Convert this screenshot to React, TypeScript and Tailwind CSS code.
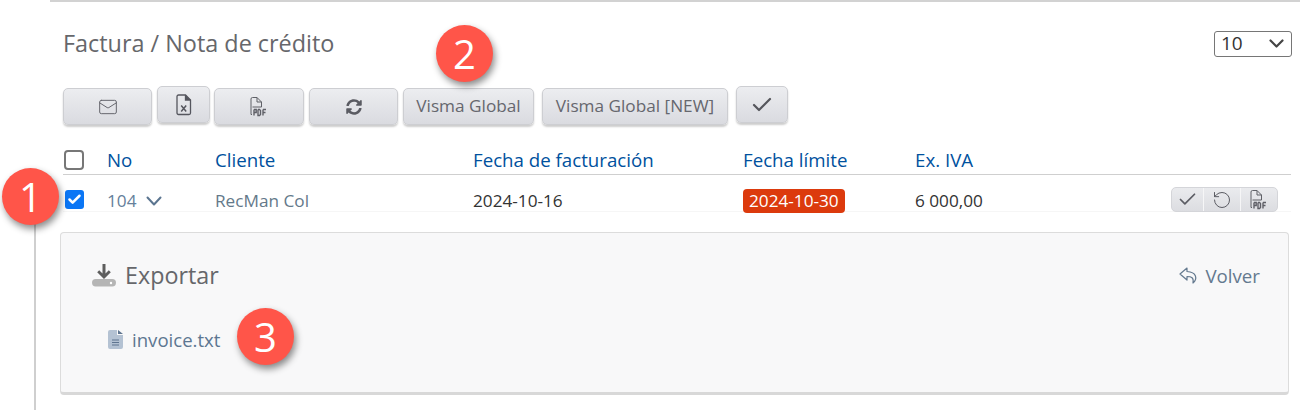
import { Check, Mail, RotateCcw } from 'lucide-react';
import { FaSyncAlt } from 'react-icons/fa';

function Chevron({ w, h, sw, color }: { w: number; h: number; sw: number; color: string }) {
  return (
    <svg width={w} height={h} viewBox={`0 0 ${w} ${h}`} fill="none" stroke={color} strokeWidth={sw} strokeLinecap="round" strokeLinejoin="round">
      <path d={`M1.500 1.500L${w / 2} ${h - 1.500}L${w - 1.500} 1.500`} />
    </svg>
  );
}

function FileX() {
  return (
    <svg width="16" height="22" viewBox="0 0 16 22" fill="none" stroke="#55565e" strokeWidth="1.300">
      <path d="M2.500 1h7l5 5v13a1.500 1.500 0 0 1-1.500 1.500H2.500A1.500 1.500 0 0 1 1 19V2.500A1.500 1.500 0 0 1 2.500 1z" />
      <path d="M9.500 1v5h5" fill="#55565e" />
      <path d="M5.200 11.500l5 6M10.200 11.500l-5 6" strokeWidth="1.500" />
    </svg>
  );
}

function FilePdf() {
  return (
    <svg width="18" height="20" viewBox="0 0 18 20" fill="none" stroke="#5f6067" strokeWidth="1">
      <path d="M2 17.500H1V2a1.500 1.500 0 0 1 1.500-1.500h4.500L11.500 5v5H2.500" />
      <path d="M7 .5V5h4.500" />
      <path d="M4 12.500v6M4 12.500h2.200v3H4M8 12.500v6h1.500l1-1v-4l-1-1H8M13 12.500v6M13 12.500h3M13 15.500h2.500" strokeWidth="1.400" />
    </svg>
  );
}

function DownloadDrive() {
  return (
    <svg width="24" height="24" viewBox="0 0 24 24">
      <rect x="0" y="15" width="24" height="7.500" rx="3.700" fill="#b5b5b5" />
      <circle cx="19" cy="19" r="1.200" fill="#fff" />
      <path d="M10.500 0h3v9.500l3.300-3.300 2 2L12 15 5.200 8.200l2-2 3.300 3.300z" fill="#5e5e5e" />
    </svg>
  );
}

function ReplyOutline() {
  return (
    <svg width="20" height="17" viewBox="0 0 20 17" fill="none" stroke="#64798f" strokeWidth="1.200" strokeLinejoin="round">
      <path d="M8 1L1 7l7 6V9.500c4.500 0 7 1 6 6.500 4.500-4 4-11-6-11.500z" />
    </svg>
  );
}

function TxtFile() {
  return (
    <svg width="15" height="19" viewBox="0 0 15 19">
      <path d="M2 0h7v5h6v12a2 2 0 0 1-2 2H2a2 2 0 0 1-2-2V2a2 2 0 0 1 2-2z" fill="#b4c2d3" />
      <path d="M10 0l5 4h-5z" fill="#5f7590" />
      <path d="M4 10h7M4 12.500h7M4 15h7" stroke="#5f7590" strokeWidth="1" />
    </svg>
  );
}

function Badge({ n, className }: { n: number; className: string }) {
  return (
    <div
      className={`absolute w-[57px] h-[57px] rounded-full bg-[#ff5549] text-white text-[40px] font-normal leading-none flex items-center justify-center shadow-[2px_4px_7px_rgba(0,0,0,0.45)] font-['Open_Sans',sans-serif] ${className}`}
    >
      {n}
    </div>
  );
}

const toolbarBtn =
  'h-[37px] flex items-center justify-center rounded-[5px] border border-[#cdced2] bg-gradient-to-b from-[#ecedf0] to-[#dadbe0] text-[#66676e] text-[17.200px] shadow-[0_2px_2px_rgba(0,0,0,0.2)]';

export default function App() {
  return (
    <div className="relative w-[1300px] h-[410px] overflow-hidden bg-white font-['Open_Sans',sans-serif]">
      <div className="ml-[50px] h-[2px] bg-[#d2d2d2]" />

      {/* Title + page size */}
      <div className="flex items-center justify-between pl-[63px] pr-[8px] pt-[21px] h-[60px]">
        <h2 className="text-[23.400px] leading-[32px] text-[#66676b]">Factura / Nota de crédito</h2>
        <div className="w-[78px] h-[26px] mt-[2px] flex items-center justify-between pl-[6px] pr-[7px] rounded-[3px] border border-[#767676] text-[19px] text-[#333]">
          10
          <Chevron w={15} h={9} sw={2.200} color="#444" />
        </div>
      </div>

      {/* Toolbar */}
      <div className="flex items-start pl-[63px] pt-[24px] h-[86px]">
        <button className={`${toolbarBtn} w-[89px] mt-[2px]`}>
          <Mail size={20} strokeWidth={1.200} />
        </button>
        <button className={`${toolbarBtn} w-[53px] ml-[5px]`}>
          <FileX />
        </button>
        <button className={`${toolbarBtn} w-[90px] ml-[4px] mt-[2px]`}>
          <FilePdf />
        </button>
        <button className={`${toolbarBtn} w-[89px] ml-[5px] mt-[2px]`}>
          <FaSyncAlt size={16} className="text-[#5a5b62]" />
        </button>
        <button className={`${toolbarBtn} w-[131px] ml-[5px] mt-[2px] pb-[2px]`}>Visma Global</button>
        <button className={`${toolbarBtn} w-[186px] ml-[8px] mt-[2px] pb-[2px]`}>Visma Global [NEW]</button>
        <button className={`${toolbarBtn} w-[52px] ml-[8px]`}>
          <Check size={24} strokeWidth={2.200} className="text-[#55565c]" />
        </button>
      </div>

      {/* Table */}
      <div className="ml-[63px] mr-[9px]">
        <div className="flex items-center h-[26px] text-[18.700px] text-[#00519e] border-b border-[#cfcfcf] mt-[-1px] box-content pb-[1px]">
          <div className="w-[44px]">
            <div className="w-[20px] h-[20px] ml-[1px] rounded-[4px] border-2 border-[#777] bg-white" />
          </div>
          <div className="w-[108px]">No</div>
          <div className="w-[258px]">Cliente</div>
          <div className="w-[270px]">Fecha de facturación</div>
          <div className="w-[172px]">Fecha límite</div>
          <div>Ex. IVA</div>
        </div>
        <div className="flex items-center h-[37px] pt-[16px] text-[17.200px] border-b border-[#f6f6f6]">
          <div className="w-[44px]">
            <div className="w-[19px] h-[19px] rounded-[3px] bg-[#0b76f5] flex items-center justify-center mb-[4px] ml-[2px]">
              <Check size={15} strokeWidth={4} className="text-white" />
            </div>
          </div>
          <div className="w-[108px] flex items-center gap-[10px] text-[#65809b]">
            104
            <Chevron w={16} h={10} sw={2} color="#5b7590" />
          </div>
          <div className="w-[258px] text-[#64798a]">RecMan Col</div>
          <div className="w-[270px] text-[#333]">2024-10-16</div>
          <div className="w-[172px]">
            <span className="inline-block h-[24px] leading-[24px] px-[6px] rounded-[4px] bg-[#dc3a0d] text-white">
              2024-10-30
            </span>
          </div>
          <div className="flex-1 text-[#333]">6 000,00</div>
          <div className="flex h-[25px] mr-[13px] mb-[3px] rounded-[5px] bg-gradient-to-b from-[#eaebee] to-[#dcdde1] border border-[#d4d5d9] text-[#5c5d64]">
            <div className="w-[32px] flex items-center justify-center border-r border-[#f6f6f7]">
              <Check size={21} strokeWidth={2} />
            </div>
            <div className="w-[37px] flex items-center justify-center border-r border-[#f6f6f7]">
              <RotateCcw size={20} strokeWidth={1.200} />
            </div>
            <div className="w-[36px] flex items-center justify-center">
              <FilePdf />
            </div>
          </div>
        </div>
      </div>

      {/* Export panel with the side rule */}
      <div className="ml-[34px] h-[198px] border-l-2 border-[#cfcfcf] pl-[24px] pt-[20px]">
        <div className="w-[1229px] h-[163px] rounded-[4px] border border-[#dcdcdc] border-b-[3px] border-b-[#d8d8d8] bg-[#f8f8f9] pl-[31px] pr-[28px]">
          <div className="flex items-center justify-between pt-[27px] h-[58px]">
            <div className="flex items-center gap-[9px] text-[23.300px] text-[#66676b]">
              <DownloadDrive />
              Exportar
            </div>
            <div className="flex items-center gap-[6px] pt-[1px] text-[18.700px] text-[#64798f]">
              <ReplyOutline />
              Volver
            </div>
          </div>
          <div className="flex items-center gap-[9px] pl-[16px] pt-[35px] text-[18.600px] text-[#5d7691]">
            <TxtFile />
            invoice.txt
          </div>
        </div>
      </div>

      <Badge n={1} className="left-[2px] top-[168px]" />
      <Badge n={2} className="left-[436px] top-[25px]" />
      <Badge n={3} className="left-[237px] top-[308px]" />
    </div>
  );
}
